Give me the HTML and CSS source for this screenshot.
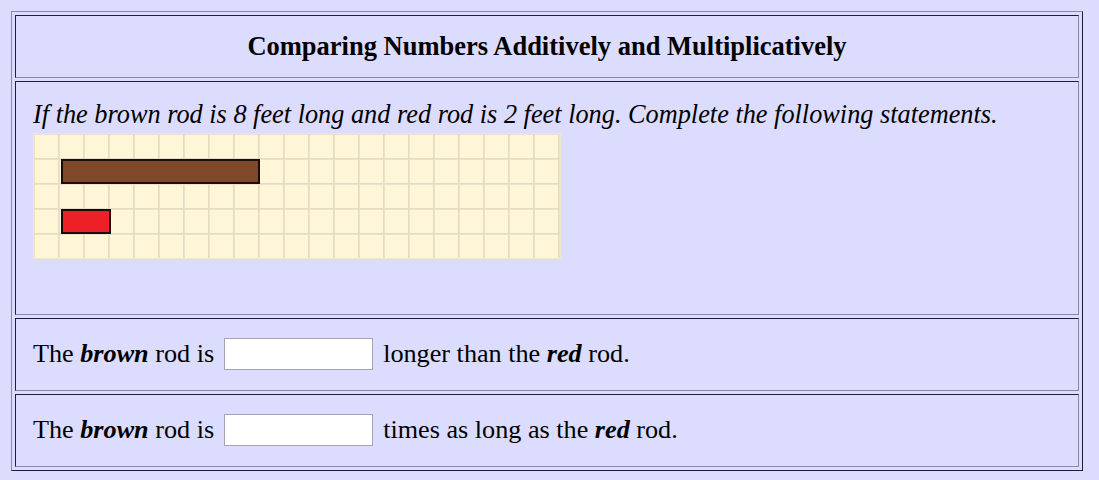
FILE: index.html
```html
<!DOCTYPE html>
<html>
<head>
<meta charset="utf-8">
<link rel="stylesheet" href="styles.css">
</head>
<body>
<div class="frame">
  <div class="cell title-cell">
    <h1 class="title">Comparing Numbers Additively and Multiplicatively</h1>
  </div>
  <div class="cell problem-cell">
    <p class="prompt">If the brown rod is 8 feet long and red rod is 2 feet long. Complete the following statements.</p>
    <svg class="grid" width="528" height="126" viewBox="0 0 528 126">
      <defs>
        <pattern id="sq" x="0" y="0" width="25" height="25" patternUnits="userSpaceOnUse">
          <rect x="0" y="0" width="25" height="25" fill="#fff6d8"/>
          <path d="M0 0 H25 M0 0 V25" stroke="#e6dcc4" stroke-width="3.5"/>
        </pattern>
      </defs>
      <rect x="0" y="0" width="528" height="126" fill="url(#sq)"/>
      <rect x="0.5" y="0.5" width="527" height="125" fill="none" stroke="#efe6cc" stroke-width="1"/>
      <rect x="29" y="27" width="197" height="23" fill="#80482b" stroke="#1a0d08" stroke-width="2"/>
      <rect x="29" y="77" width="48" height="23" fill="#ed1f27" stroke="#1a0808" stroke-width="2"/>
    </svg>
  </div>
  <div class="cell answer-cell">
    <span>The <b><i>brown</i></b> rod is</span>
    <input class="answer" type="text">
    <span>longer than the <b><i>red</i></b> rod.</span>
  </div>
  <div class="cell answer-cell">
    <span>The <b><i>brown</i></b> rod is</span>
    <input class="answer" type="text">
    <span>times as long as the <b><i>red</i></b> rod.</span>
  </div>
</div>
</body>
</html>
```

FILE: styles.css
```css
html, body {
  margin: 0;
  padding: 0;
  background: #dcdcfe;
}
body {
  padding: 11px;
  font-family: "Liberation Serif", "Times New Roman", serif;
  color: #000;
}
.frame {
  box-sizing: border-box;
  width: 1072px;
  border: 1px solid;
  border-color: #8a8aa4 #1e1e3a #1e1e3a #8a8aa4;
  padding: 3px;
  display: flex;
  flex-direction: column;
  gap: 3px;
}
.cell {
  box-sizing: border-box;
  border: 1px solid;
  border-color: #1e1e3a #8a8aa4 #8a8aa4 #1e1e3a;
}
.title-cell {
  height: 63px;
  display: flex;
  align-items: center;
  justify-content: center;
}
.title {
  margin: 0;
  font-size: 26.5px;
  font-weight: bold;
}
.problem-cell {
  height: 234px;
  padding: 0 17px;
}
.prompt {
  margin: 19px 0 0 0;
  font-style: italic;
  font-size: 26.3px;
  line-height: 28px;
}
.grid {
  display: block;
  margin-top: 4px;
}
.answer-cell {
  height: 73px;
  padding: 0 17px 2px;
  display: flex;
  align-items: center;
  gap: 10px;
  font-size: 26.2px;
}
.answer {
  box-sizing: border-box;
  width: 149px;
  height: 32px;
  margin: 0;
  border: 1px solid #a4a4b4;
  background: #fff;
  font-size: 18px;
}
```
